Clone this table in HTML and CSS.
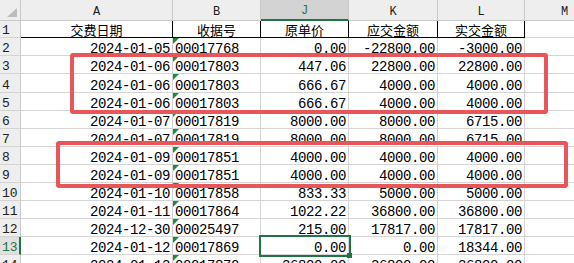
FILE: index.html
```html
<!DOCTYPE html>
<html lang="zh-CN">
<head>
<meta charset="utf-8">
<title>Sheet</title>
<link rel="stylesheet" href="styles.css">
</head>
<body>
<div class="sheet">
  <div class="c hd corner"><span class="tri"></span></div>
  <div class="c hd">A</div>
  <div class="c hd">B</div>
  <div class="c hd hd-sel">J</div>
  <div class="c hd">K</div>
  <div class="c hd">L</div>
  <div class="c hd">M</div>

  <div class="c rn">1</div>
  <div class="c th">交费日期</div>
  <div class="c th">收据号</div>
  <div class="c th">原单价</div>
  <div class="c th">应交金额</div>
  <div class="c th">实交金额</div>
  <div class="c"></div>

  <div class="c rn">2</div>
  <div class="c r">2024-01-05</div>
  <div class="c l txt">00017768</div>
  <div class="c r">0.00</div>
  <div class="c r">-22800.00</div>
  <div class="c r">-3000.00</div>
  <div class="c"></div>

  <div class="c rn">3</div>
  <div class="c r">2024-01-06</div>
  <div class="c l txt">00017803</div>
  <div class="c r">447.06</div>
  <div class="c r">22800.00</div>
  <div class="c r">22800.00</div>
  <div class="c"></div>

  <div class="c rn">4</div>
  <div class="c r">2024-01-06</div>
  <div class="c l txt">00017803</div>
  <div class="c r">666.67</div>
  <div class="c r">4000.00</div>
  <div class="c r">4000.00</div>
  <div class="c"></div>

  <div class="c rn">5</div>
  <div class="c r">2024-01-06</div>
  <div class="c l txt">00017803</div>
  <div class="c r">666.67</div>
  <div class="c r">4000.00</div>
  <div class="c r">4000.00</div>
  <div class="c"></div>

  <div class="c rn">6</div>
  <div class="c r">2024-01-07</div>
  <div class="c l txt">00017819</div>
  <div class="c r">8000.00</div>
  <div class="c r">8000.00</div>
  <div class="c r">6715.00</div>
  <div class="c"></div>

  <div class="c rn">7</div>
  <div class="c r">2024-01-07</div>
  <div class="c l txt">00017819</div>
  <div class="c r">8000.00</div>
  <div class="c r">8000.00</div>
  <div class="c r">6715.00</div>
  <div class="c"></div>

  <div class="c rn">8</div>
  <div class="c r">2024-01-09</div>
  <div class="c l txt">00017851</div>
  <div class="c r">4000.00</div>
  <div class="c r">4000.00</div>
  <div class="c r">4000.00</div>
  <div class="c"></div>

  <div class="c rn">9</div>
  <div class="c r">2024-01-09</div>
  <div class="c l txt">00017851</div>
  <div class="c r">4000.00</div>
  <div class="c r">4000.00</div>
  <div class="c r">4000.00</div>
  <div class="c"></div>

  <div class="c rn">10</div>
  <div class="c r">2024-01-10</div>
  <div class="c l txt">00017858</div>
  <div class="c r">833.33</div>
  <div class="c r">5000.00</div>
  <div class="c r">5000.00</div>
  <div class="c"></div>

  <div class="c rn">11</div>
  <div class="c r">2024-01-11</div>
  <div class="c l txt">00017864</div>
  <div class="c r">1022.22</div>
  <div class="c r">36800.00</div>
  <div class="c r">36800.00</div>
  <div class="c"></div>

  <div class="c rn">12</div>
  <div class="c r">2024-12-30</div>
  <div class="c l txt">00025497</div>
  <div class="c r">215.00</div>
  <div class="c r">17817.00</div>
  <div class="c r">17817.00</div>
  <div class="c"></div>

  <div class="c rn rn-sel">13</div>
  <div class="c r">2024-01-12</div>
  <div class="c l txt">00017869</div>
  <div class="c r sel">0.00</div>
  <div class="c r">0.00</div>
  <div class="c r">18344.00</div>
  <div class="c"></div>

  <div class="c rn">14</div>
  <div class="c r">2024-01-13</div>
  <div class="c l txt">00017870</div>
  <div class="c r">36800.00</div>
  <div class="c r">36800.00</div>
  <div class="c r">36800.00</div>
  <div class="c"></div>

  <div class="mark mark-a"></div>
  <div class="mark mark-b"></div>
</div>
</body>
</html>
```

FILE: styles.css
```css
html, body {
  margin: 0;
  padding: 0;
  background: #ffffff;
  overflow: hidden;
}

.sheet {
  position: relative;
  display: grid;
  grid-template-columns: 21px 152px 88px 88px 89px 87px 80px;
  grid-template-rows: 21px 17px 18px 18px 19px 18px 18px 18px 18px 18px 18px 18px 18px 18px 18px;
  width: 605px;
  font-family: "Liberation Mono", "DejaVu Sans Mono", monospace;
  font-size: 14px;
  letter-spacing: -0.4px;
  color: #000000;
}

.c {
  box-sizing: border-box;
  display: flex;
  align-items: flex-end;
  justify-content: flex-start;
  border-right: 1px solid #d4d4d4;
  border-bottom: 1px solid #d4d4d4;
  padding: 0 2px 1px 2px;
  line-height: 10px;
  white-space: nowrap;
  overflow: hidden;
}

.r {
  justify-content: flex-end;
  padding-right: 2px;
}

.l {
  justify-content: flex-start;
}

/* text-format indicator */
.txt {
  position: relative;
}

.txt::before {
  content: "";
  position: absolute;
  left: 0;
  top: 0;
  width: 0;
  height: 0;
  border-top: 6px solid #1e8b3b;
  border-right: 6px solid transparent;
}

/* column headers */
.hd {
  background: #eeeeee;
  border-right-color: #c9c9c9;
  border-bottom-color: #c9c9c9;
  justify-content: center;
  align-items: center;
  padding: 3px 0 0 0;
  font-size: 12px;
  letter-spacing: 0;
  color: #222222;
}

.hd-sel {
  background: #d3d3d3;
  border-bottom: 2px solid #217346;
  color: #217346;
}

.corner {
  position: relative;
}

.tri {
  position: absolute;
  right: 3px;
  bottom: 3px;
  width: 0;
  height: 0;
  border-bottom: 9px solid #bdbdbd;
  border-left: 10px solid transparent;
}

/* row numbers */
.rn {
  background: #eeeeee;
  border-right-color: #c9c9c9;
  border-bottom-color: #d4d4d4;
  padding-left: 2px;
  font-size: 13px;
  letter-spacing: 0;
  color: #222222;
}

.rn-sel {
  background: #e0e0e0;
  border-right: 2px solid #217346;
  color: #217346;
}

/* title row */
.th {
  justify-content: center;
  align-items: center;
  padding: 2px 0 0 0;
  font-family: "Noto Sans CJK SC", "Noto Sans", sans-serif;
  font-size: 13px;
  letter-spacing: 0;
  line-height: 14px;
  border-right-color: #000000;
  border-bottom-color: #000000;
}

/* selected cell */
.sel {
  position: relative;
  overflow: visible;
  outline: 2px solid #217346;
  z-index: 2;
}

.sel::after {
  content: "";
  position: absolute;
  right: -4px;
  bottom: -4px;
  width: 5px;
  height: 5px;
  background: #217346;
}

/* red annotation frames */
.mark {
  position: absolute;
  box-sizing: border-box;
  border: 4px solid #e8565a;
  border-radius: 3px;
  z-index: 3;
}

.mark-a {
  left: 70px;
  top: 53px;
  width: 478px;
  height: 61px;
}

.mark-b {
  left: 56px;
  top: 141px;
  width: 512px;
  height: 47px;
}
```
